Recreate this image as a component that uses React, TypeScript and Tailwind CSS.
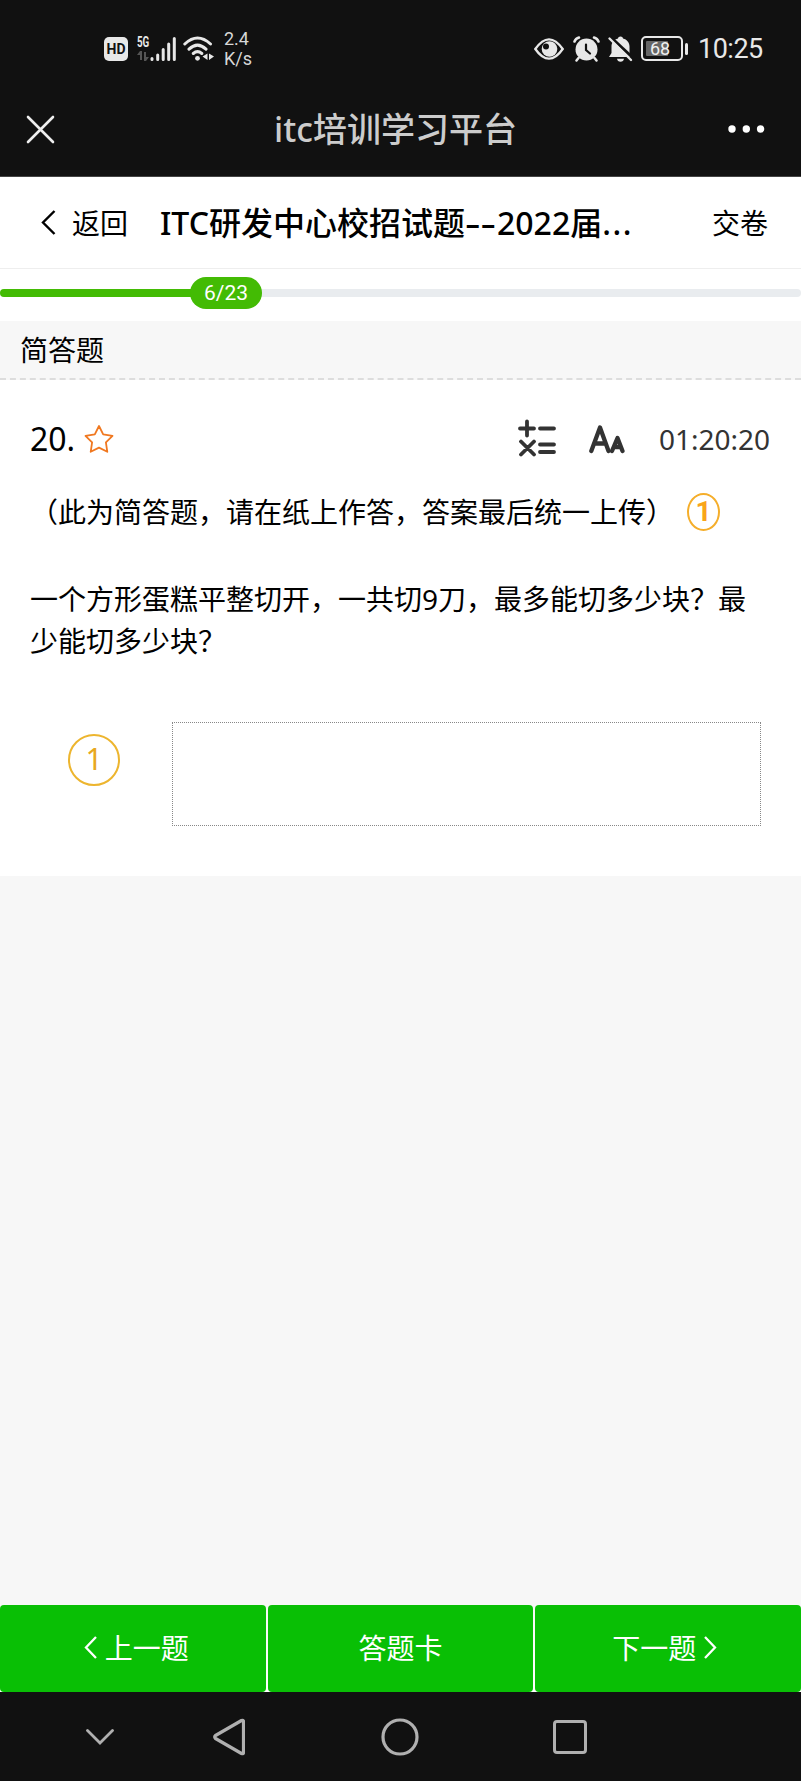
import { ReactNode } from 'react';

const question = {
  number: 20,
  hint: '（此为简答题，请在纸上作答，答案最后统一上传）',
  body: '一个方形蛋糕平整切开，一共切9刀，最多能切多少块？最少能切多少块？',
};

const progress = { current: 6, total: 23 };

function StatusBar() {
  return (
    <div className="h-[88px] flex items-center justify-between pl-[104px] pr-[36px] pt-[9px] text-[#e8e8e8]">
      <div className="flex items-center">
        <div className="w-6 h-6 rounded-[5px] bg-[#e8e8e8] text-[#111] flex items-center justify-center font-['Roboto'] text-[14px] font-bold leading-none">
          HD
        </div>
        <div className="ml-[9px] w-[13px] h-6 flex flex-col justify-between">
          <span className="font-['Roboto'] text-[14px] leading-[11px] font-bold origin-left scale-x-[0.7]">5G</span>
          <svg width="12" height="10" viewBox="0 0 12 10" fill="#555">
            <path d="M3 0h2v9H3zM3 0v4H0zM7 1h2v9H7zM9 10V6h3z" />
          </svg>
        </div>
        <svg className="w-[26px] h-6" viewBox="0 0 26 24" stroke="currentColor" strokeWidth="3" strokeLinecap="round">
          <path d="M2 21.500v1M7.700 18v4.500M13.200 12.500v10M18.700 7v15.500M24.300 1.500v21" />
        </svg>
        <svg className="ml-[7px] w-[31px] h-[25px]" viewBox="0 0 31 25" fill="none" stroke="currentColor" strokeWidth="3" strokeLinecap="round">
          <path d="M1.800 8Q14.500-4 27.500 8M6 13.200Q14.500 5 23 13.200M10.300 17.500Q14.500 13.800 18.800 17.500" />
          <circle cx="14.500" cy="22.300" r="2.400" fill="currentColor" stroke="none" />
          <path d="M24.500 17.500v6.500l-5-3.500zM26 17.500v6.500l5-3.500z" fill="currentColor" stroke="none" />
        </svg>
        <div className="ml-[10px] flex flex-col font-['Roboto'] text-[18px] leading-[20px] text-[#d8d8d8]">
          <span>2.4</span>
          <span>K/s</span>
        </div>
      </div>

      <div className="flex items-center">
        <svg className="w-[30px] h-[22px]" viewBox="0 0 30 22" fill="none" stroke="currentColor" strokeWidth="2.300">
          <path d="M1.300 11Q8 1.300 15 1.300T28.700 11Q22 20.700 15 20.700T1.300 11Z" />
          <circle cx="15.500" cy="11" r="7.800" fill="currentColor" stroke="none" />
          <circle cx="12" cy="8.500" r="3" fill="#111" stroke="none" />
        </svg>
        <svg className="ml-[9px] w-[27px] h-[26px]" viewBox="0 0 27 26" fill="none" stroke="currentColor" strokeWidth="2.500" strokeLinecap="round">
          <circle cx="13.500" cy="13.500" r="11" fill="currentColor" stroke="none" />
          <path d="M1.500 5.500Q2.500 2.500 6 1.500M25.500 5.500Q24.500 2.500 21 1.500M5.500 22l-2 2.500M21.500 22l2 2.500" />
          <path d="M13 8.500v5.500l4 3.500" stroke="#111" strokeWidth="2.200" />
        </svg>
        <svg className="ml-[8px] w-[25px] h-[26px]" viewBox="0 0 25 26">
          <path d="M12.500 0.500c1.700 0 2.500 1 2.500 2 4 1 6.500 4 6.500 8v6.500l2.500 4H1L3.500 17v-6.500c0-4 2.500-7 6.500-8 0-1 .8-2 2.500-2zM9 22.800h7q-.5 3-3.500 3t-3.500-3z" fill="currentColor" />
          <path d="M1.500 0 25 22" stroke="#111" strokeWidth="3" />
          <path d="M1.500 2.500 23 24" stroke="currentColor" strokeWidth="2.300" strokeLinecap="round" />
        </svg>
        <div className="ml-[8px] w-[42px] h-[25px] rounded-[5px] border-2 border-[#e8e8e8] p-[3px] flex">
          <div className="w-[22px] h-full bg-[#666] rounded-[1px] flex items-center pl-[4px]">
            <span className="font-['Roboto'] text-[18px] leading-none text-[#f0f0f0]">68</span>
          </div>
        </div>
        <div className="ml-[2px] w-[3px] h-[12px] rounded-sm bg-[#e8e8e8]" />
        <span className="ml-[10px] w-[67px] font-['Roboto'] text-[27px] leading-none tracking-[-0.5px] whitespace-nowrap translate-y-px">10:25</span>
      </div>
    </div>
  );
}

function AppHeader() {
  return (
    <div className="h-[88px] flex items-center justify-between pl-[26px] pr-[36px] pb-[6px]">
      <svg className="w-[29px] h-[29px]" viewBox="0 0 29 29" stroke="#eee" strokeWidth="2.600" strokeLinecap="round">
        <path d="M2 2l25 25M27 2 2 27" />
      </svg>
      <h1 className="ml-[8px] text-[34px] leading-[40px] text-[#ccc] font-medium">itc培训学习平台</h1>
      <svg className="w-[37px] h-[8px]" viewBox="0 0 37 8" fill="#fff">
        <circle cx="4" cy="4" r="3.700" />
        <circle cx="18.300" cy="4" r="3.700" />
        <circle cx="32.600" cy="4" r="3.700" />
      </svg>
    </div>
  );
}

function FooterButton({ children }: { children: ReactNode }) {
  return (
    <button className="flex-1 h-[87px] pb-[2px] rounded bg-[#09bf05] text-white text-[28px] flex items-center justify-center">
      {children}
    </button>
  );
}

export default function App() {
  return (
    <div className="w-[801px] h-[1781px] flex flex-col bg-[#f7f7f7] text-black font-['Noto_Sans','Noto_Sans_CJK_SC',sans-serif] overflow-hidden">
      <div className="bg-[#111] border-b border-[#444]">
        <StatusBar />
        <AppHeader />
      </div>

      <div className="h-[92px] bg-white border-b border-[#eee] flex items-center pl-[41px] pr-[33px] text-[28px]">
        <svg className="w-[15px] h-[25px]" viewBox="0 0 15 25" fill="none" stroke="#000" strokeWidth="2.400">
          <path d="M13.500 1 2 12.500 13.500 24" />
        </svg>
        <span className="ml-[16px]">返回</span>
        <h2 className="ml-[32px] w-[480px] flex text-[32px] font-medium whitespace-nowrap">
          ITC研发中心校招试题
          <span className="w-[32px]">
            <span className="block w-[21px] origin-left scale-x-150">--</span>
          </span>
          2022届
          <span className="tracking-[1.500px]">...</span>
        </h2>
        <span className="ml-auto">交卷</span>
      </div>

      <div className="h-[52px] bg-white flex items-center pb-[4px]">
        <div className="w-full h-2 rounded-full bg-[#e9ecef] flex items-center">
          <div className="w-[200px] h-2 rounded-l-full bg-[#43bb04]" />
          <span className="-ml-[10px] w-[72px] h-8 rounded-full bg-[#43bb04] text-white font-['Roboto'] text-[21px] leading-8 text-center">
            {progress.current}/{progress.total}
          </span>
        </div>
      </div>

      <div className="h-[59px] border-b-2 border-dashed border-[#ddd] flex items-center pl-[20px] text-[28px]">
        简答题
      </div>

      <div className="h-[496px] bg-white pl-[30px] pr-[29px] pt-[35px]">
        <div className="h-[48px] flex items-center">
          <span className="text-[32px] leading-none">{question.number}.</span>
          <svg className="ml-[9px] w-[30px] h-[30px]" viewBox="0 0 30 30" fill="none" stroke="#f07820" strokeWidth="1.800" strokeLinejoin="round">
            <path d="M15 2l4.200 8.300 9.300 1.500-6.600 6.600 1.400 9.400L15 23.600l-8.300 4.200 1.400-9.400L1.500 11.800l9.300-1.500z" />
          </svg>
          <div className="ml-auto flex items-center">
            <svg className="w-[38px] h-[38px] -translate-y-px" viewBox="0 0 38 38" stroke="#333" strokeWidth="3.800" strokeLinecap="round">
              <path d="M2 9.500h14M9 2.500v14M22 9.500h14M3 22.500l13 13M16 22.500 3 35.500M22 25.500h14M22 33h14" />
            </svg>
            <svg className="ml-[33px] w-[36px] h-[29px]" viewBox="0 0 36 29" fill="none" stroke="#333" strokeWidth="4.300" strokeLinecap="round" strokeLinejoin="round">
              <path d="M2.300 26 11 2.500l8.500 23.500M6 18.500h10.500" />
              <path d="M23 26 28.500 13l5 13M25.500 22h6" />
            </svg>
            <span className="ml-[34px] w-[113px] text-[28px] leading-none text-[#333]">01:20:20</span>
          </div>
        </div>

        <div className="mt-[28px] h-[42px] flex items-center text-[28px]">
          <span>{question.hint}</span>
          <span className="ml-[13px] w-[33px] h-[38px] rounded-[50%] border-2 border-[#f5ae2b] text-[#f9a51a] font-['Roboto'] font-bold leading-[33px] text-center">
            1
          </span>
        </div>

        <p className="mt-[45px] w-[728px] text-[28px] leading-[42px]">{question.body}</p>

        <div className="mt-[60px] pl-[38px] flex">
          <span className="mt-[12px] w-[52px] h-[52px] rounded-full border-2 border-[#edb52e] text-[#e8a820] text-[30px] leading-[45px] text-center">
            1
          </span>
          <div className="ml-[52px] w-[589px] h-[104px] border border-dotted border-[#888]" />
        </div>
      </div>

      <div className="flex-1" />

      <div className="flex gap-[2px] bg-gradient-to-b from-[#f7f7f7] to-white">
        <FooterButton>
          <svg className="ml-[7px] mr-[8px] w-[13px] h-[23px]" viewBox="0 0 13 23" fill="none" stroke="#fff" strokeWidth="2.300">
            <path d="M12 1 2 11.500 12 22" />
          </svg>
          上一题
        </FooterButton>
        <FooterButton>答题卡</FooterButton>
        <FooterButton>
          下一题
          <svg className="ml-[8px] mr-[7px] w-[13px] h-[23px]" viewBox="0 0 13 23" fill="none" stroke="#fff" strokeWidth="2.300">
            <path d="M1 1l10 10.500L1 22" />
          </svg>
        </FooterButton>
      </div>

      {/* system navigation */}
      <div className="h-[89px] bg-[#111] flex items-center pl-[86px] text-[#b0b0b0]">
        <svg className="w-[28px] h-[16px]" viewBox="0 0 28 16" fill="none" stroke="currentColor" strokeWidth="2.800" strokeLinecap="round">
          <path d="M1.500 1.500 14 14 26.500 1.500" />
        </svg>
        <svg className="ml-[99px] w-[32px] h-[38px]" viewBox="0 0 32 38" fill="none" stroke="currentColor" strokeWidth="3.200" strokeLinejoin="round">
          <path d="M28.500 2.500q2-.8 2 1v31q0 1.800-2 1L2.500 20.500q-1.500-1.500 0-3z" />
        </svg>
        <svg className="ml-[136px] w-[38px] h-[38px]" viewBox="0 0 38 38" fill="none" stroke="currentColor" strokeWidth="3.200">
          <circle cx="19" cy="19" r="17" />
        </svg>
        <div className="ml-[134px] w-[34px] h-[34px] rounded-[4px] border-[3px] border-[#b0b0b0]" />
      </div>
    </div>
  );
}
